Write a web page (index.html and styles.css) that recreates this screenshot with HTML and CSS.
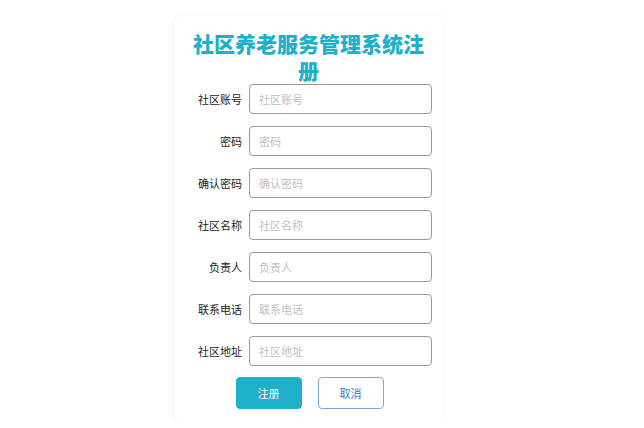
FILE: index.html
```html
<!DOCTYPE html>
<html>
<head>
    <title>社区养老服务管理系统注册</title>
    <meta charset="utf-8">
    <link rel="stylesheet" href="styles.css">
</head>
<body>
    <div class="page">
        <div class="register-card">
            <h1 class="title">社区养老服务管理系统注册</h1>

            <form class="register-form">
                <div class="form-row">
                    <label class="form-label">社区账号</label>
                    <input type="text" class="form-input" placeholder="社区账号">
                </div>
                <div class="form-row">
                    <label class="form-label">密码</label>
                    <input type="password" class="form-input" placeholder="密码">
                </div>
                <div class="form-row">
                    <label class="form-label">确认密码</label>
                    <input type="password" class="form-input" placeholder="确认密码">
                </div>
                <div class="form-row">
                    <label class="form-label">社区名称</label>
                    <input type="text" class="form-input" placeholder="社区名称">
                </div>
                <div class="form-row">
                    <label class="form-label">负责人</label>
                    <input type="text" class="form-input" placeholder="负责人">
                </div>
                <div class="form-row">
                    <label class="form-label">联系电话</label>
                    <input type="text" class="form-input" placeholder="联系电话">
                </div>
                <div class="form-row">
                    <label class="form-label">社区地址</label>
                    <input type="text" class="form-input" placeholder="社区地址">
                </div>

                <div class="btn-group">
                    <button type="button" class="btn btn-primary">注册</button>
                    <button type="button" class="btn btn-cancel">取消</button>
                </div>
            </form>
        </div>
    </div>
</body>
</html>
```

FILE: styles.css
```css
body {
    margin: 0;
    background-color: #fff;
    font-family: "Noto Sans CJK SC", "Noto Sans", sans-serif;
}
.page {
    padding: 16px 0 0 174px;
}
.register-card {
    width: 269px;
    box-sizing: border-box;
    padding: 14px 11px 11px 11px;
    border-radius: 8px;
    background-color: #fff;
    box-shadow: 0 0 6px rgba(255, 160, 160, 0.18);
}
.title {
    margin: 0;
    font-size: 21px;
    line-height: 27px;
    font-weight: 900;
    color: #1db1c9;
    text-align: center;
}
.register-form {
    margin: 0;
}
.form-row {
    display: flex;
    align-items: center;
    margin-bottom: 12px;
}
.form-label {
    width: 64px;
    padding-right: 7px;
    box-sizing: border-box;
    text-align: right;
    font-size: 11px;
    color: #222;
}
.form-input {
    width: 183px;
    height: 30px;
    box-sizing: border-box;
    padding: 0 9px;
    border: 1px solid #9a9a9a;
    border-radius: 4px;
    font-family: inherit;
    font-size: 11px;
    color: #333;
    outline: none;
}
.form-input::placeholder {
    color: #c0c0c0;
}
.btn-group {
    display: flex;
    justify-content: center;
    gap: 16px;
    padding-left: 2px;
    margin-top: -1px;
}
.btn {
    width: 66px;
    height: 32px;
    border-radius: 4px;
    font-family: inherit;
    font-size: 11px;
    cursor: pointer;
}
.btn-primary {
    background-color: #1fb0c9;
    border: 1px solid #1fb0c9;
    color: #fff;
}
.btn-cancel {
    background-color: #fff;
    border: 1px solid #7ea6df;
    color: #3b76cf;
}
```
